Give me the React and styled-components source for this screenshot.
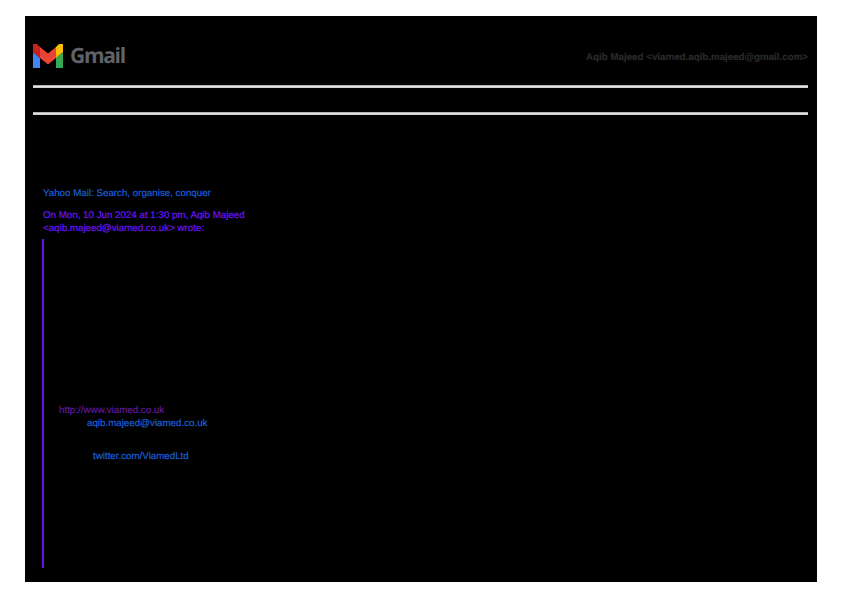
import React from 'react';
import styled, { createGlobalStyle } from 'styled-components';

const GlobalStyle = createGlobalStyle`
  html, body {
    margin: 0;
    padding: 0;
    background: #fff;
  }
`;

const Sheet = styled.div`
  box-sizing: border-box;
  width: 792px;
  height: 566px;
  margin: 16px 0 0 25px;
  padding: 27px 9px 0 8px;
  background: #000;
  font-family: 'Liberation Sans', Arial, sans-serif;
  font-size: 9.75px;
  line-height: 13px;
  text-rendering: geometricPrecision;
  -webkit-text-stroke: 0.2px;
  overflow: hidden;
`;

const Header = styled.header`
  display: flex;
  align-items: center;
  justify-content: space-between;
  height: 26px;
`;

const Brand = styled.div`
  display: flex;
  align-items: center;
  gap: 7px;
`;

const BrandName = styled.span`
  font-family: 'Open Sans', sans-serif;
  font-size: 21px;
  line-height: 26px;
  font-weight: 700;
  letter-spacing: -1.3px;
  color: #5f6368;
  -webkit-text-stroke: 0;
`;

const Account = styled.span`
  padding-top: 2px;
  font-weight: 700;
  color: #2a2a2a;
`;

const Rule = styled.hr`
  height: 3px;
  margin: ${(p) => p.$top}px 0 0;
  border: 0;
  background: linear-gradient(#999, #e4e4e4 50%, #c4c4c4);
`;

const Message = styled.main`
  padding: 72px 0 0 10px;
`;

const Line = styled.div`
  padding-left: ${(p) => p.$indent || 0}px;
  color: ${(p) => p.$color || '#1a5fd8'};
  white-space: nowrap;
`;

const Signoff = styled.p`
  margin: 0;
  padding: 9px 0 0;
  color: #6a14f5;
`;

const Quote = styled.blockquote`
  box-sizing: border-box;
  height: 329px;
  margin: 4px 0 0 -1px;
  padding: 165px 0 0 15px;
  border-left: 2px solid #6611ee;
`;

const Twitter = styled(Line)`
  margin-top: 20px;
`;

function GmailMark() {
  return (
    <svg width="30" height="24" viewBox="0 0 30 24" aria-hidden="true">
      <path d="M0 8l7 6v10H0z" fill="#4285f4" />
      <path d="M30 8l-7 6v10h7z" fill="#34a853" />
      <path d="M23 3l3-3h4v8l-7 6z" fill="#fbbc04" />
      <path d="M7 3l8 6.500L23 3v11l-8 6.500L7 14z" fill="#ea4335" />
      <path d="M0 0h4l3 3v11L0 8z" fill="#c5221f" />
    </svg>
  );
}

export default function App() {
  return (
    <>
      <GlobalStyle />
      <Sheet>
        <Header>
          <Brand>
            <GmailMark />
            <BrandName>Gmail</BrandName>
          </Brand>
          <Account>Aqib Majeed &lt;viamed.aqib.majeed@gmail.com&gt;</Account>
        </Header>
        <Rule $top={16} />
        <Rule $top={24} />
        <Message>
          <Line>Yahoo Mail: Search, organise, conquer</Line>
          <Signoff>
            On Mon, 10 Jun 2024 at 1:30 pm, Aqib Majeed
            <br />
            &lt;aqib.majeed@viamed.co.uk&gt; wrote:
          </Signoff>
          <Quote>
            <Line $color="#5f1a9b">http://www.viamed.co.uk</Line>
            <Line $indent={28}>aqib.majeed@viamed.co.uk</Line>
            <Twitter $indent={34}>twitter.com/ViamedLtd</Twitter>
          </Quote>
        </Message>
      </Sheet>
    </>
  );
}
